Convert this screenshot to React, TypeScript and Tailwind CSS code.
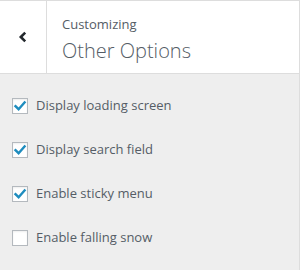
import { useState } from "react";

const options = [
	{ label: "Display loading screen", checked: true },
	{ label: "Display search field", checked: true },
	{ label: "Enable sticky menu", checked: true },
	{ label: "Enable falling snow", checked: false },
];

const CheckBox = ({ checked, onClick }: { checked: boolean; onClick: () => void }) => (
	<span
		onClick={onClick}
		className="flex items-center justify-center w-4 h-4 bg-white border border-[#b4b9be] shadow-[inset_0_1px_2px_rgba(0,0,0,0.07)] cursor-pointer shrink-0"
	>
		{checked && (
			<svg width="14" height="14" viewBox="0 0 14 14">
				<path
					d="M2.5 7.2 L5.6 10.2 L11.6 3.4"
					fill="none"
					stroke="#1e8cbe"
					strokeWidth="2.4"
					strokeLinecap="square"
					strokeLinejoin="miter"
				/>
			</svg>
		)}
	</span>
);

const App = () => {
	const [items, setItems] = useState(options);
	const toggle = (i: number) =>
		setItems(items.map((it, idx) => (idx === i ? { ...it, checked: !it.checked } : it)));

	return (
		<div
			className="w-[300px] h-[270px] bg-[#eeeeee] border-t border-r border-[#dddddd] text-[#555d66]"
			style={{ fontFamily: '"Open Sans", sans-serif' }}
		>
			<div className="flex h-[73px] bg-white border-b border-[#dddddd]">
				<button className="flex items-center justify-center w-[47px] border-r border-[#dddddd]">
					<svg width="14" height="14" viewBox="0 0 14 14" className="-mt-[1px]">
						<path
							d="M9.2 2.6 L4.8 7 L9.2 11.4"
							fill="none"
							stroke="#23282d"
							strokeWidth="2.6"
						/>
					</svg>
				</button>
				<div className="flex flex-col pl-[15px] pt-[13px]">
					<span className="text-[13px] leading-[20px]">Customizing</span>
					<h3 className="text-[20px] leading-[26px] font-light mt-[4px]">Other Options</h3>
				</div>
			</div>
			<div className="flex flex-col pt-[10px]">
				{items.map((it, i) => (
					<label key={it.label} className="flex items-center gap-2 h-[44px] pl-3 text-[13px]">
						<CheckBox checked={it.checked} onClick={() => toggle(i)} />
						<span>{it.label}</span>
					</label>
				))}
			</div>
		</div>
	);
};

export default App;
